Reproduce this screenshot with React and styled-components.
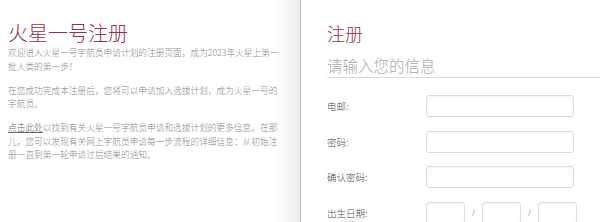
import React from "react";
import styled, { createGlobalStyle } from "styled-components";

const GlobalStyle = createGlobalStyle`
  html, body {
    margin: 0;
    padding: 0;
    background: #fff;
  }
  body {
    font-family: "Noto Sans CJK SC", "Liberation Sans", sans-serif;
  }
`;

const App = () => {
  return (
    <Page>
      <GlobalStyle />
      <Intro>
        <IntroTitle>火星一号注册</IntroTitle>
        <Para>欢迎进入火星一号宇航员申请计划的注册页面，成为2023年火星上第一批人类的第一步！</Para>
        <Para>在您成功完成本注册后，您将可以申请加入选拔计划，成为火星一号的宇航员。</Para>
        <Para>
          <Link href="#">点击此处</Link>以找到有关火星一号宇航员申请和选拔计划的更多信息。在那儿，您可以发现有关网上宇航员申请每一步流程的详细信息：从初始注册一直到第一轮申请过后结果的通知。
        </Para>
      </Intro>

      <FormPanel>
        <FormTitle>注册</FormTitle>
        <Subtitle>请输入您的信息</Subtitle>
        <Form>
          <Row>
            <Label>电邮:</Label>
            <Input type="text" />
          </Row>
          <Row>
            <Label>密码:</Label>
            <Input type="password" />
          </Row>
          <Row>
            <Label>确认密码:</Label>
            <Input type="password" />
          </Row>
          <Row $top>
            <Label $stacked>
              出生日期:
              <Hint>(年月日)</Hint>
            </Label>
            <DateGroup>
              <DateBox type="text" />
              <Slash>/</Slash>
              <DateBox type="text" />
              <Slash>/</Slash>
              <DateBox type="text" />
            </DateGroup>
          </Row>
        </Form>
      </FormPanel>
    </Page>
  );
};

export default App;

const Page = styled.div`
  display: flex;
  height: 222px;
  overflow: hidden;
`;

const Intro = styled.div`
  width: 300px;
  flex-shrink: 0;
  box-sizing: border-box;
  padding: 21px 0 0 8px;
  background: linear-gradient(90deg, #fff 0, #fff 275px, #ededed 300px);
`;

const IntroTitle = styled.h1`
  margin: 0 0 1px;
  font-size: 20px;
  line-height: 24px;
  font-weight: 300;
  color: #93304a;
`;

const Para = styled.p`
  width: 272px;
  margin: 0 0 10.5px;
  font-size: 8.7px;
  line-height: 13.5px;
  font-weight: 300;
  color: #8a8a8a;
`;

const Link = styled.a`
  color: #666;
  text-decoration: underline;
`;

const FormPanel = styled.div`
  flex: 1;
  border-left: 1px solid #cfb3ae;
  padding: 22px 0 0 26px;
`;

const FormTitle = styled.h2`
  margin: 0 0 11px;
  font-size: 18px;
  line-height: 22px;
  font-weight: 300;
  color: #93304a;
`;

const Subtitle = styled.div`
  font-size: 15.5px;
  line-height: 20px;
  font-weight: 300;
  color: #a8a8a8;
  padding-bottom: 2px;
  border-bottom: 1px solid #dcdcdc;
`;

const Form = styled.div`
  display: flex;
  flex-direction: column;
  gap: 13.5px;
  margin-top: 17px;
`;

const Row = styled.div`
  display: flex;
  align-items: ${(p) => (p.$top ? "flex-start" : "center")};
  height: 22px;
`;

const Label = styled.div`
  width: 99px;
  flex-shrink: 0;
  font-size: 9.5px;
  line-height: 12px;
  font-weight: 300;
  color: #4a4a4a;
  display: flex;
  flex-direction: column;
  padding-top: ${(p) => (p.$stacked ? "5px" : "0")};
`;

const Hint = styled.span`
  font-size: 8px;
  line-height: 11px;
  color: #aaa;
  padding-left: 2px;
`;

const Input = styled.input`
  box-sizing: border-box;
  width: 148px;
  height: 22px;
  margin: 0;
  border: 1px solid #dcdcdc;
  border-radius: 3px;
  background: #fff;
  box-shadow: inset 0 1px 2px rgba(0, 0, 0, 0.04);
  outline: none;
`;

const DateGroup = styled.div`
  display: flex;
  align-items: center;
`;

const DateBox = styled(Input)`
  width: 39px;
`;

const Slash = styled.span`
  width: 17px;
  text-align: center;
  font-size: 9px;
  color: #aaa;
  font-family: "Liberation Sans", sans-serif;
`;
